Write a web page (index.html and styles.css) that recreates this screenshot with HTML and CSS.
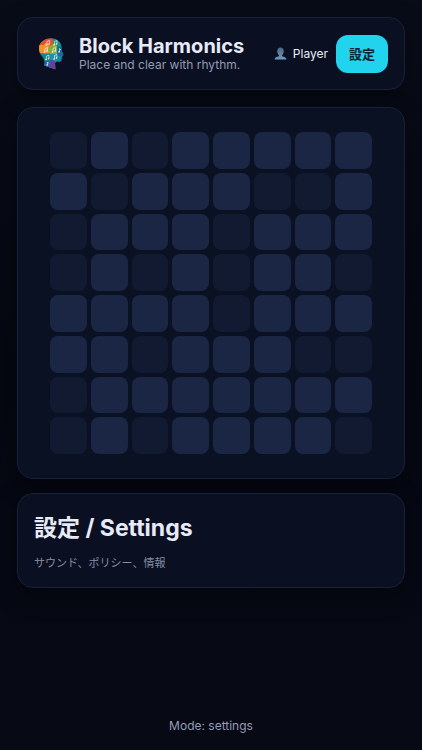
FILE: index.html
```html
<!DOCTYPE html>
<html lang="ja">
<head>
<meta charset="UTF-8" />
<meta name="viewport" content="width=device-width, initial-scale=1" />
<title>Block Harmonics</title>
<link rel="stylesheet" href="styles.css">
</head>
<body>

<header class="card header">
  <svg class="logo" viewBox="0 0 50 64" aria-hidden="true">
    <defs>
      <clipPath id="head">
        <path d="M22 1C35 0 44 7 45 19C45 23 45 25 46 27L49 34C49 36 47 36 46 37L45 45C44 48 40 48 35 47L32 50L33 63L10 55C13 48 11 43 7 37C2 32 0 27 0 20C1 8 10 2 22 1Z" />
      </clipPath>
    </defs>
    <g clip-path="url(#head)">
      <path fill="#1687a0" d="M0 0h50v64H0z" />
      <path fill="#e5502f" d="M0 0h28v18H0z" />
      <path fill="#f0932b" d="M0 14h10a4 4 0 0 1 8 0h3v17H0z" />
      <path fill="#168f8c" d="M28 0h22v18H28z" />
      <path fill="#86b03a" d="M21 15h5a4 4 0 0 1 8 0h2v17H21v-5a4 4 0 0 1 0-8z" />
      <path fill="#176c9d" d="M36 17h14v19H36v-6a4 4 0 0 0 0-7z" />
      <path fill="#128a88" d="M0 31h10a4 4 0 0 0 8 0h4v15H0z" />
      <path fill="#218fab" d="M22 32h14v15H22z" />
      <path fill="#2467a6" d="M5 46h19v18H5z" />
      <path fill="#66419a" d="M22 45c4-2 8 0 13 4v15H20z" />
    </g>
    <g fill="none" stroke="#fff" stroke-width="1.2">
      <path d="M16 14V7l5-2v7M31 14V7l5-2v7M12 28v-7l5-2v7M28 28v-7l5-2v7M41 28v-7l3 3M15 43v-7l5-2v7M31 42v-7l5-2v7M17 54v-6l3 3" />
    </g>
    <g fill="#fff">
      <circle cx="15" cy="14" r="1.5" /><circle cx="20" cy="12" r="1.5" />
      <circle cx="30" cy="14" r="1.5" /><circle cx="35" cy="12" r="1.5" />
      <circle cx="11" cy="28" r="1.5" /><circle cx="16" cy="26" r="1.5" />
      <circle cx="27" cy="28" r="1.5" /><circle cx="32" cy="26" r="1.5" />
      <circle cx="40" cy="28" r="1.5" />
      <circle cx="14" cy="43" r="1.5" /><circle cx="19" cy="41" r="1.5" />
      <circle cx="30" cy="42" r="1.5" /><circle cx="35" cy="40" r="1.5" />
      <circle cx="16" cy="54" r="1.5" />
    </g>
  </svg>
  <div class="brand">
    <h1>Block Harmonics</h1>
    <p>Place and clear with rhythm.</p>
  </div>
  <div class="player">
    <svg class="avatar" viewBox="0 0 24 24" aria-hidden="true">
      <defs>
        <linearGradient id="bust" x1="0" y1="0" x2="0" y2="1">
          <stop offset="0" stop-color="#486780" />
          <stop offset="1" stop-color="#7099c2" />
        </linearGradient>
      </defs>
      <path fill="url(#bust)" d="M12 1c4 0 6 3 6 7 0 3-1 5-3 7v2c4 1 8 2 8 6H1c0-4 4-5 8-6v-2c-2-2-3-4-3-7 0-4 2-7 6-7z" />
    </svg>
    <span>Player</span>
  </div>
  <button class="settings-btn" type="button">設定</button>
</header>

<main>
  <section class="card board-card">
    <div class="board" id="board"></div>
  </section>

  <section class="card panel">
    <h2>設定 / Settings</h2>
    <p>サウンド、ポリシー、情報</p>
  </section>
</main>

<footer>Mode: settings</footer>

<script>
  // 1 = lit cell, 0 = empty cell
  const rows = [
    '01011111',
    '10111001',
    '01110111',
    '01010110',
    '11110111',
    '11011100',
    '01111111',
    '01011110'
  ];
  const board = document.getElementById('board');

  for (const state of rows.join('')) {
    const cell = document.createElement('div');
    cell.className = state === '1' ? 'cell lit' : 'cell';
    board.appendChild(cell);
  }
</script>

</body>
</html>
```

FILE: styles.css
```css
* {
  box-sizing: border-box;
}
body {
  display: flex;
  flex-direction: column;
  min-height: 100vh;
  margin: 0;
  padding: 17px 17px 14px;
  font-family: Inter, "Noto Sans CJK JP", sans-serif;
  background: linear-gradient(#080c17, #050711 50%, #070a15);
  color: #e8eaf8;
}
h1, h2, p {
  margin: 0;
}
.card {
  background: #0a1021;
  border: 1px solid #192039;
  border-radius: 16px;
  box-shadow: 0 8px 24px rgba(0, 0, 0, 0.35);
}
.header {
  display: flex;
  align-items: center;
  height: 73px;
  padding: 0 16px;
}
.logo {
  flex: none;
  width: 25px;
  height: 32px;
  margin: 0 15px 0 5px;
}
.brand {
  flex: 1;
  padding-top: 1px;
  white-space: nowrap;
}
h1 {
  font-size: 20px;
  line-height: 22px;
  font-weight: 700;
}
.brand p {
  font-size: 12px;
  line-height: 16px;
  color: #939bb5;
}
.player {
  display: flex;
  align-items: center;
  gap: 6px;
  margin-right: 8px;
  font-size: 12px;
}
.avatar {
  width: 13px;
  height: 13px;
}
.settings-btn {
  width: 52px;
  height: 38px;
  padding: 0;
  border: none;
  border-radius: 12px;
  background: #22d3ee;
  color: #06222f;
  font-family: inherit;
  font-size: 13px;
  font-weight: 700;
  cursor: pointer;
}
.board-card {
  margin-top: 17px;
  padding: 24px;
  background: #0a1122;
}
.board {
  display: grid;
  grid-template-columns: repeat(8, 1fr);
  gap: 4px;
  max-width: 322px;
  margin: 0 auto;
}
.cell {
  aspect-ratio: 1;
  border-radius: 8px;
  background: #121a31;
}
.cell.lit {
  background: #1b2644;
}
.panel {
  margin-top: 14px;
  padding: 17px 16px 15px;
}
h2 {
  font-size: 23px;
  line-height: 34px;
  font-weight: 700;
}
.panel p {
  margin-top: 9px;
  font-size: 11px;
  line-height: 18px;
  color: #858da3;
}
footer {
  margin-top: auto;
  font-size: 12px;
  line-height: 20px;
  text-align: center;
  color: #939bb5;
}
```
